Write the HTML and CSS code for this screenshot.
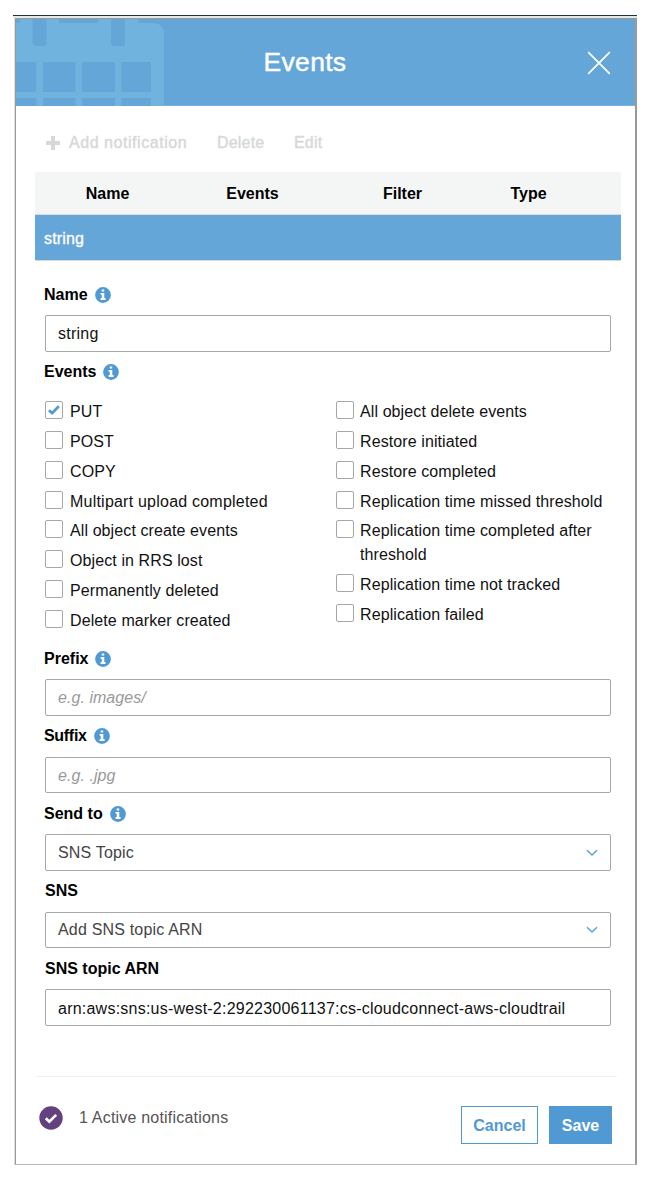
FILE: index.html
```html
<!DOCTYPE html>
<html lang="en">
<head>
<meta charset="utf-8">
<title>Events</title>
<link rel="stylesheet" href="styles.css">
</head>
<body>
<svg class="sprite" aria-hidden="true">
  <symbol id="info" viewBox="0 0 16 16"><circle cx="8" cy="8" r="7.9" fill="#5199d3"/><path fill="#fff" d="M6.7 2.4h2.5v2.2H6.7zM5.6 6.1h3.7v5h1.2v1.8H5.6v-1.8h1.2V7.8H5.6z"/></symbol>
  <symbol id="chevron" viewBox="0 0 12 8"><path d="M1 1.3 6 6l5-4.7" fill="none" stroke="#58a4dc" stroke-width="1.5"/></symbol>
</svg>
<div class="frame">
<main class="panel">
  <header class="header">
    <svg class="calendar" viewBox="0 0 149 87">
      <path fill="#70b3df" d="M0 4H4V0H43V4H82V0H122V4H138Q148 5 148 15V87H0Z"/>
      <path fill="#65a6d8" d="M16.500 0V24q0 3 3 3h8q3 0 3-3V0zM95 0V24q0 3 3 3h8q3 0 3-3V0zM0 43H20.200V73H0zM27 43H59.500V73H27zM66 43H99V73H66zM105.300 43H135V73H105.300zM0 79H20.200V87H0zM27 79H59.500V87H27zM66 79H99V87H66zM105.300 79H135V87H105.300z"/>
    </svg>
    <h1 class="title">Events</h1>
    <svg class="close" viewBox="0 0 24 24"><path d="M1.200 1.200 22.800 22.800M22.800 1.200 1.200 22.800" stroke="#fff" stroke-width="1.700"/></svg>
  </header>
  <nav class="toolbar">
    <span class="tool add"><svg class="plus" viewBox="0 0 14 14"><path d="M7 0V14M0 7H14" stroke="#d5d9d8" stroke-width="4"/></svg>Add notification</span>
    <span class="tool delete">Delete</span>
    <span class="tool edit">Edit</span>
  </nav>
  <section class="table">
    <div class="table-head"><span>Name</span><span>Events</span><span>Filter</span><span>Type</span></div>
    <div class="table-row">string</div>
  </section>
  <form class="form">
    <label class="label">Name<svg class="info"><use href="#info"/></svg></label>
    <input class="input" value="string">
    <label class="label">Events<svg class="info"><use href="#info"/></svg></label>
    <div class="events">
      <div class="column">
        <div class="check"><span class="box"><svg class="tick" viewBox="0 0 13 12"><path d="M1 6.200 4.500 9.400 11.700 2" fill="none" stroke="#519ad4" stroke-width="3"/></svg></span><span>PUT</span></div>
        <div class="check"><span class="box"></span><span>POST</span></div>
        <div class="check"><span class="box"></span><span>COPY</span></div>
        <div class="check spaced"><span class="box"></span><span>Multipart upload completed</span></div>
        <div class="check"><span class="box"></span><span>All object create events</span></div>
        <div class="check"><span class="box"></span><span>Object in RRS lost</span></div>
        <div class="check"><span class="box"></span><span>Permanently deleted</span></div>
        <div class="check"><span class="box"></span><span>Delete marker created</span></div>
      </div>
      <div class="column">
        <div class="check"><span class="box"></span><span>All object delete events</span></div>
        <div class="check"><span class="box"></span><span>Restore initiated</span></div>
        <div class="check"><span class="box"></span><span>Restore completed</span></div>
        <div class="check"><span class="box"></span><span>Replication time missed threshold</span></div>
        <div class="check"><span class="box"></span><span>Replication time completed after<br>threshold</span></div>
        <div class="check"><span class="box"></span><span>Replication time not tracked</span></div>
        <div class="check"><span class="box"></span><span>Replication failed</span></div>
      </div>
    </div>
    <label class="label">Prefix<svg class="info"><use href="#info"/></svg></label>
    <input class="input" placeholder="e.g. images/">
    <label class="label tight">Suffix<svg class="info"><use href="#info"/></svg></label>
    <input class="input low" placeholder="e.g. .jpg">
    <label class="label">Send to<svg class="info"><use href="#info"/></svg></label>
    <div class="input select">SNS Topic<svg class="chevron"><use href="#chevron"/></svg></div>
    <label class="label plain">SNS</label>
    <div class="input select">Add SNS topic ARN<svg class="chevron"><use href="#chevron"/></svg></div>
    <label class="label plain">SNS topic ARN</label>
    <input class="input low" value="arn:aws:sns:us-west-2:292230061137:cs-cloudconnect-aws-cloudtrail">
  </form>
  <footer class="footer">
    <svg class="status" viewBox="0 0 24 24"><circle cx="12" cy="12" r="11.700" fill="#63417f"/><path d="m6.800 12.300 3.500 3.400 6.900-6.800" fill="none" stroke="#fff" stroke-width="2.700"/></svg>
    <span class="active">1 Active notifications</span>
    <button class="button cancel">Cancel</button>
    <button class="button save">Save</button>
  </footer>
</main>
</div>
</body>
</html>
```
FILE: styles.css
```css
* { box-sizing: border-box; }
body {
  margin: 0;
  padding: 15px 17px 0 13px;
  background: #fff;
  color: #111;
  font: 16px/24px "Liberation Sans", Arial, sans-serif;
}
.sprite { display: none; }
.frame {
  height: 1150px;
  border-top: 1px solid #1e333b;
  background: linear-gradient(#e9e9e4, #e9e9e4) 0 0 / 100% 2px no-repeat;
  padding: 2px 0 0 2px;
}
.panel {
  height: 1147px;
  display: flex;
  flex-direction: column;
  border: 1px solid #999;
  border-right: 2px solid #999;
  border-bottom-color: #b9b9b9;
  box-shadow: -1px 0 0 #dedede;
  background: #fff;
}
.header {
  height: 87px;
  flex: none;
  display: grid;
  grid-template-columns: 149px 1fr 149px;
  background: #65a6d8;
  border-bottom: 1px solid #70b4e5;
}
.calendar { width: 149px; height: 87px; margin-bottom: -1px; }
.title {
  margin: 0 0 0 -41px;
  padding-top: 25px;
  justify-self: center;
  color: #fff;
  font-size: 26.5px;
  font-weight: 400;
  line-height: 36px;
  letter-spacing: .3px;
  -webkit-text-stroke: .4px #fff;
}
.close { width: 24px; height: 24px; justify-self: end; margin: 32px 24px 0 0; }
.toolbar {
  height: 66px;
  flex: none;
  display: flex;
  padding: 25px 0 0 30px;
  color: #d5d9d8;
  -webkit-text-stroke: .4px #d5d9d8;
}
.tool { display: flex; align-items: center; height: 24px; }
.plus { width: 14px; height: 14px; margin-right: 9px; }
.add { width: 171px; letter-spacing: .55px; }
.delete { width: 77px; letter-spacing: .2px; }
.edit { letter-spacing: .2px; }
.table { margin: 0 14px 0 19px; flex: none; }
.table-head {
  height: 43px;
  padding-top: 1px;
  display: grid;
  grid-template-columns: 145px 145px 155px 97px;
  align-items: center;
  text-align: center;
  background: #f4f6f6;
  border-bottom: 1px solid #d8dddd;
  font-weight: 700;
  color: #000;
}
.table-row {
  height: 46px;
  padding-left: 9px;
  line-height: 47px;
  color: #fff;
  letter-spacing: .15px;
  -webkit-text-stroke: .3px #fff;
  background: #65a6d8;
  border-bottom: 1px solid #d5d9d8;
}
.form { padding: 13px 25px 0 29px; flex: none; }
.label {
  height: 41px;
  margin-left: -1px;
  display: flex;
  align-items: center;
  font-weight: 700;
  color: #000;
}
.plain { margin-left: 0; }
.info { width: 16px; height: 16px; margin-left: 7px; }
.tight { letter-spacing: -.3px; }
.input {
  display: block;
  width: 566px;
  height: 36.5px;
  padding: 1px 12px 0;
  border: 1px solid #a3a9a9;
  border-radius: 2px;
  background: #fff;
  color: #111;
  font: inherit;
  letter-spacing: .23px;
  outline: none;
}
.low { padding-top: 3px; }
.input::placeholder { color: #999; font-style: italic; letter-spacing: .05px; opacity: 1; }
.select {
  display: flex;
  align-items: center;
  justify-content: space-between;
  color: #444;
  letter-spacing: .18px;
}
.chevron { width: 12px; height: 8px; }
.events { height: 245.500px; display: flex; padding-top: 4.500px; }
.column { width: 291px; flex: none; letter-spacing: .1px; }
.column + .column .box { margin-right: 6px; }
.check { display: flex; min-height: 29.850px; padding-top: 3px; padding-bottom: 2.850px; white-space: nowrap; }
.spaced { letter-spacing: .22px; }
.box {
  width: 18px;
  height: 18px;
  flex: none;
  margin: 1px 7px 0 0;
  padding: 2px;
  border: 1px solid #a3a9a9;
  border-radius: 2px;
}
.tick { width: 12px; height: 12px; display: block; }
.footer {
  height: 88px;
  display: flex;
  margin: auto 18px 0 19px;
  padding: 29px 5px 0 4px;
  border-top: 1px solid #f1f3f3;
}
.status { width: 24px; height: 24px; flex: none; }
.active { margin-left: 16px; color: #555; line-height: 24px; letter-spacing: .2px; flex: 1; }
.button {
  height: 38px;
  padding: 2px 0 0;
  border: 1px solid #5199d3;
  background: #fff;
  color: #5199d3;
  font: 700 16px/24px "Liberation Sans", Arial, sans-serif;
}
.cancel { width: 77px; margin-right: 11px; }
.save { width: 63px; background: #5199d3; color: #fff; }
```
